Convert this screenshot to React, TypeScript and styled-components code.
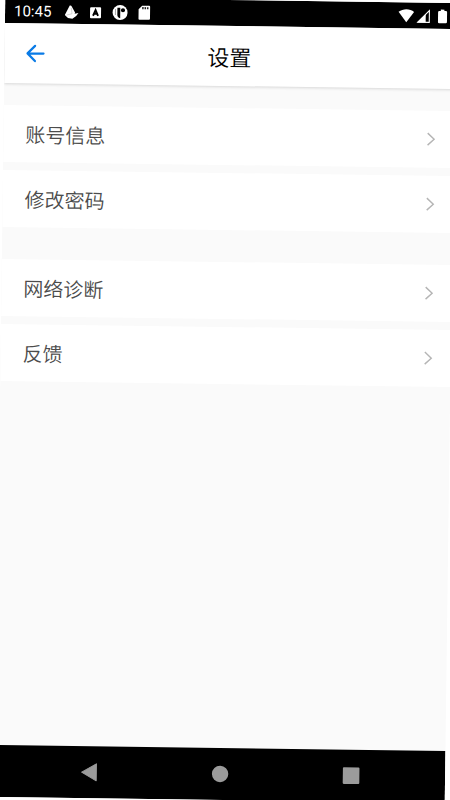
import React from 'react';
import styled, { createGlobalStyle } from 'styled-components';

const GlobalStyle = createGlobalStyle`
  *, *::before, *::after { box-sizing: border-box; }
  html, body { margin: 0; background: #fff; }
  body { overflow: hidden; }
  button { border: 0; padding: 0; background: none; font: inherit; color: inherit; cursor: pointer; }
  svg { display: block; flex: none; }
`;

const Screen = styled.div`
  display: flex;
  flex-direction: column;
  min-height: 100vh;
  overflow: hidden;
  background: #fafafa;
  font-family: "Noto Sans CJK SC", "Noto Sans", sans-serif;
  transform: rotate(0.75deg);
`;

const StatusBar = styled.div`
  display: flex;
  align-items: center;
  justify-content: space-between;
  height: 26px;
  padding: 2px 7px 0 9px;
  background: #000;
  color: #fff;
`;

const StatusGroup = styled.div<{ $gap: number }>`
  display: flex;
  align-items: center;
  gap: ${({ $gap }) => $gap}px;
`;

const Clock = styled.time`
  margin-right: 4px;
  font: 15px/20px Roboto, sans-serif;
`;

const Header = styled.header`
  display: grid;
  grid-template-columns: 62px 1fr 62px;
  align-items: center;
  height: 60px;
  background: #fff;
  box-shadow: 0 1px 3px rgba(0, 0, 0, 0.14);
`;

const BackButton = styled.button`
  display: flex;
  align-items: center;
  justify-content: center;
  height: 60px;
  color: #0a7be6;
`;

const Title = styled.h1`
  margin: 0;
  font-size: 22px;
  line-height: 30px;
  font-weight: 350;
  text-align: center;
  color: #000;
`;

const Content = styled.main`
  display: flex;
  flex: 1;
  flex-direction: column;
  gap: 32px;
  padding-top: 22px;
`;

const Group = styled.section`
  display: flex;
  flex-direction: column;
  gap: 8px;
`;

const Row = styled.button`
  display: flex;
  align-items: center;
  justify-content: space-between;
  height: 57px;
  padding: 0 16px 0 22px;
  background: #fff;
  color: #4c4c4c;
`;

const RowLabel = styled.span`
  font-size: 20px;
  line-height: 28px;
  font-weight: 350;
`;

const NavBar = styled.nav`
  display: grid;
  grid-template-columns: repeat(3, 1fr);
  height: 52px;
  padding: 0 29px;
  background: #000;
`;

const NavButton = styled.button`
  display: flex;
  align-items: center;
  justify-content: center;
  color: #9b9b9b;
`;

const Chevron = () => (
  <svg width="12" height="16" viewBox="0 0 12 16" fill="none" stroke="#b5b5b5" strokeWidth="1.4" aria-hidden="true">
    <path d="M2.2 1.5 8.7 7.5 2.2 13.5" />
  </svg>
);

const groups = [
  ['账号信息', '修改密码'],
  ['网络诊断', '反馈'],
];

export default function App() {
  return (
    <>
      <GlobalStyle />
      <Screen>
        <StatusBar>
          <StatusGroup $gap={9}>
            <Clock>10:45</Clock>
            <svg width="15" height="15" viewBox="0 0 15 15" fill="#fff" aria-hidden="true">
              <path d="M5.6.6Q7 0 7.6 1.6L11 7.6 10.6 8.8 14.4 8Q12.8 11.4 8.4 13.8L4 13.2.8 10.2Z" />
              <path d="M7.2 3 8 8.8 2.4 10.2" fill="none" stroke="#999" strokeWidth="0.4" />
            </svg>
            <svg width="15" height="15" viewBox="0 0 15 15" aria-hidden="true">
              <rect x="2" y="2" width="11" height="11" rx="1" fill="#fff" />
              <path d="M5 10.5 7.5 4.8l2.5 5.7M6 8.6h3" fill="none" stroke="#000" strokeWidth="1.9" />
            </svg>
            <svg width="16" height="16" viewBox="0 0 16 16" aria-hidden="true">
              <circle cx="8" cy="8" r="7.5" fill="#fff" />
              <path d="M5.3 3.2h2.9v10.4q-2.9-.4-2.9-3.4Z" fill="#000" />
              <path d="M3.4 4.4v6" stroke="#aaa" strokeWidth="1" />
              <circle cx="10.9" cy="5.6" r="2.1" fill="#000" />
            </svg>
            <svg width="14" height="16" viewBox="0 0 14 16" aria-hidden="true">
              <path d="M5 .8h7a1 1 0 0 1 1 1v12a1 1 0 0 1-1 1H2.5a1 1 0 0 1-1-1V4.4Z" fill="#fff" />
              <path d="M5.8 2.2v2.2M8.2 2.2v2.2M10.6 2.2v2.2" stroke="#222" strokeWidth="1.5" />
            </svg>
          </StatusGroup>
          <StatusGroup $gap={2}>
            <svg width="17" height="16" viewBox="0 0 17 16" fill="#fff" aria-hidden="true">
              <path d="M1.5 3.6C6 .1 13 .1 17 3.6L9.3 14Z" />
            </svg>
            <svg width="15" height="16" viewBox="0 0 15 16" aria-hidden="true">
              <path d="M1.8 13.7 13.3 2v11.7Z" fill="none" stroke="#fff" strokeWidth="1.1" />
              <path d="M1.2 14 9.7 5.5V14Z" fill="#fff" />
            </svg>
            <svg width="15" height="16" viewBox="0 0 15 16" fill="#fff" aria-hidden="true">
              <path d="M7.7.8h3.6v1.4h1.5q1.2 0 1.2 1.2v9.8q0 1.2-1.2 1.2H6.2Q5 14.4 5 13.2V3.4q0-1.2 1.2-1.2h1.5Z" />
            </svg>
          </StatusGroup>
        </StatusBar>
        <Header>
          <BackButton aria-label="返回">
            <svg width="20" height="20" viewBox="0 0 20 20" fill="none" stroke="currentColor" strokeWidth="2.2" strokeLinecap="round" strokeLinejoin="round" aria-hidden="true">
              <path d="M9.5 2.4 2 10l7.5 7.6M2.3 10H18" />
            </svg>
          </BackButton>
          <Title>设置</Title>
        </Header>
        <Content>
          {groups.map((labels) => (
            <Group key={labels[0]}>
              {labels.map((label) => (
                <Row key={label}>
                  <RowLabel>{label}</RowLabel>
                  <Chevron />
                </Row>
              ))}
            </Group>
          ))}
        </Content>
        <NavBar>
          <NavButton aria-label="后退">
            <svg width="18" height="20" viewBox="0 0 18 20" fill="currentColor" stroke="currentColor" strokeLinejoin="round" aria-hidden="true">
              <path d="M1.5 10 16.2 1.5v17Z" />
            </svg>
          </NavButton>
          <NavButton aria-label="主页">
            <svg width="18" height="18" viewBox="0 0 18 18" fill="currentColor" aria-hidden="true">
              <circle cx="9" cy="9" r="8.2" />
            </svg>
          </NavButton>
          <NavButton aria-label="最近任务">
            <svg width="18" height="18" viewBox="0 0 18 18" fill="currentColor" aria-hidden="true">
              <rect x="0.7" y="0.7" width="16.6" height="16.6" rx="1" />
            </svg>
          </NavButton>
        </NavBar>
      </Screen>
    </>
  );
}
